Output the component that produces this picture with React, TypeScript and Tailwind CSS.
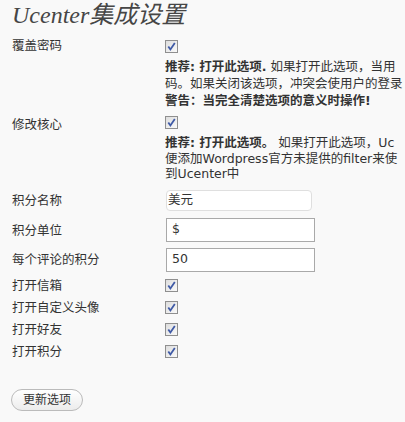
import React from "react";

const Check = () => (
  <svg width="13" height="13" viewBox="0 0 13 13" className="block shrink-0">
    <defs>
      <linearGradient id="cbg" x1="0" y1="0" x2="1" y2="1">
        <stop offset="0" stopColor="#dcdcdc" />
        <stop offset="1" stopColor="#fbfbfb" />
      </linearGradient>
    </defs>
    <rect x="0.5" y="0.5" width="12" height="12" fill="url(#cbg)" stroke="#8f8f8f" />
    <path d="M3.3 6.4 L5.4 9.4 L9.8 3" fill="none" stroke="#3f5aa6" strokeWidth="1.8" />
  </svg>
);

export default function App() {
  return (
    <div
      className="min-h-screen w-[405px] overflow-hidden bg-[#f9f9f9] text-[12.5px] text-[#333]"
      style={{ fontFamily: '"DejaVu Sans", "Noto Sans CJK SC", sans-serif' }}
    >
      <div className="h-[38px] pl-3 pt-[3px]">
        <h2
          className="whitespace-nowrap text-[24px] font-normal italic leading-[24px] text-[#464646]"
          style={{ fontFamily: '"Liberation Serif", "Noto Sans CJK SC", serif' }}
        >
          Ucenter集成设置
        </h2>
      </div>

      {/* 覆盖密码 */}
      <div className="flex">
        <div className="w-[165px] shrink-0 pl-3 leading-4">覆盖密码</div>
        <div className="min-w-0 flex-1 overflow-hidden">
          <div className="mt-[2px]">
            <Check />
          </div>
          <div className="mt-[5px] whitespace-nowrap leading-[17px]">
            <div>
              <b>推荐: 打开此选项.</b> 如果打开此选项，当用
            </div>
            <div>码。如果关闭该选项，冲突会使用户的登录</div>
            <div>
              <b>警告：当完全清楚选项的意义时操作!</b>
            </div>
          </div>
        </div>
      </div>

      {/* 修改核心 */}
      <div className="mt-[6px] flex">
        <div className="w-[165px] shrink-0 pl-3 pt-[2px] leading-4">修改核心</div>
        <div className="min-w-0 flex-1 overflow-hidden">
          <div className="mt-[1px]">
            <Check />
          </div>
          <div className="mt-[6px] whitespace-nowrap leading-[15.5px]">
            <div>
              <b>推荐: 打开此选项。</b> 如果打开此选项，Uc
            </div>
            <div>便添加Wordpress官方未提供的filter来使</div>
            <div>到Ucenter中</div>
          </div>
        </div>
      </div>

      {/* 积分名称 */}
      <div className="mt-[8px] flex">
        <div className="w-[165px] shrink-0 pl-3 pt-[3px] leading-4">积分名称</div>
        <div className="pl-[1px]">
          <div className="flex h-[21px] w-[146px] items-center rounded-[4px] border border-[#dfdfdf] bg-white pl-[1px]">
            美元
          </div>
        </div>
      </div>

      {/* 积分单位 */}
      <div className="mt-[7px] flex">
        <div className="w-[165px] shrink-0 pl-3 pt-[5px] leading-4">积分单位</div>
        <div className="pl-[1px]">
          <div className="flex h-[24px] w-[149px] items-center border border-[#a9a9a9] bg-white pl-[5px]">$</div>
        </div>
      </div>

      {/* 每个评论的积分 */}
      <div className="mt-[6px] flex">
        <div className="w-[165px] shrink-0 pl-3 pt-[4px] leading-4">每个评论的积分</div>
        <div className="pl-[1px]">
          <div className="flex h-[24px] w-[149px] items-center border border-[#a9a9a9] bg-white pl-[5px]">50</div>
        </div>
      </div>

      <div className="mt-[6px]">
        {["打开信箱", "打开自定义头像", "打开好友", "打开积分"].map((t) => (
          <div key={t} className="flex h-[22px]">
            <div className="w-[165px] shrink-0 pl-3 leading-4">{t}</div>
            <div className="mt-[1px]">
              <Check />
            </div>
          </div>
        ))}
      </div>

      <div className="mt-[23px] pl-[11px]">
        <button className="flex h-[22px] w-[72px] items-center justify-center rounded-full border border-[#bbb] bg-gradient-to-b from-white to-[#ececec] text-[12px] text-[#333]">
          更新选项
        </button>
      </div>
    </div>
  );
}
